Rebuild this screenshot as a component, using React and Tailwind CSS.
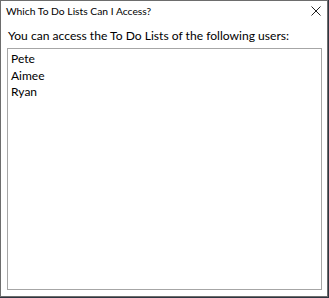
export default function App() {
  const users = ["Pete", "Aimee", "Ryan"];

  return (
    <div className="w-[329px] h-[298px] bg-[#2f3540] overflow-hidden">
      <div
        className="w-[328px] h-[297px] bg-white border border-[#6d6d6d] flex flex-col text-black"
        style={{ fontFamily: 'Lato, "Noto Sans", sans-serif' }}
      >
        {/* Title bar */}
        <div className="h-[21px] flex items-center justify-between pl-[5px] pr-[5px]">
          <span className="text-[10.3px] leading-none text-black whitespace-nowrap">Which To Do Lists Can I Access?</span>
          <svg width="10" height="10" viewBox="0 0 10 10" className="mr-[1px] mt-[-1px]">
            <path d="M0.5 0.5 L9.5 9.5 M9.5 0.5 L0.5 9.5" stroke="#222" strokeWidth="1" />
          </svg>
        </div>

        {/* Body */}
        <div className="flex-1 flex flex-col px-[6px] pb-[6px]">
          <p className="text-[12.1px] leading-[16px] mt-[6px] ml-[1px] text-black whitespace-nowrap">
            You can access the To Do Lists of the following users:
          </p>
          <div className="flex-1 mt-[4px] mr-[-1px] border border-[#a6a6a6] px-[3px] pt-[2px]">
            {users.map((u) => (
              <div key={u} className="text-[12px] leading-[16.5px] text-black">
                {u}
              </div>
            ))}
          </div>
        </div>
      </div>
    </div>
  );
}
